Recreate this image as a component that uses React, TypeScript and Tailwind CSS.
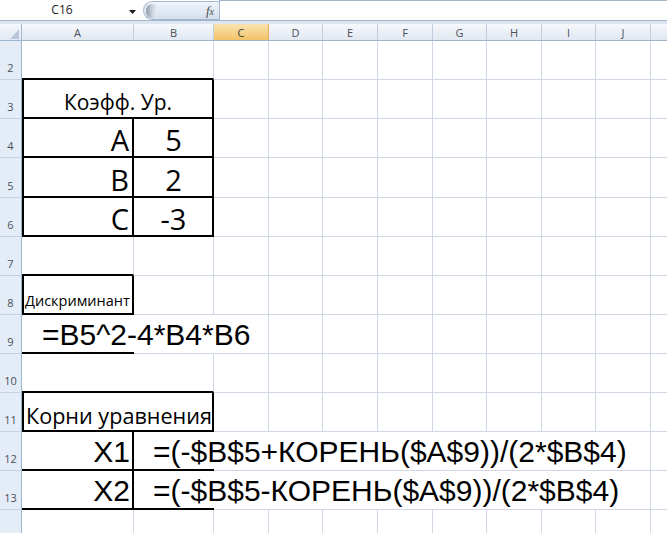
import React from "react";

const F_CAL = "font-['Open_Sans','Noto_Sans',sans-serif]";
const F_AR = "font-['Liberation_Sans',Arial,sans-serif]";

type Col = { k: string; w: string; label?: boolean };
const COLS: Col[] = [
  { k: "A", w: "w-[112px]" },
  { k: "B", w: "w-[80px]" },
  { k: "C", w: "w-[55px]" },
  { k: "D", w: "w-[54px]" },
  { k: "E", w: "w-[55px]" },
  { k: "F", w: "w-[55px]" },
  { k: "G", w: "w-[54px]" },
  { k: "H", w: "w-[55px]" },
  { k: "I", w: "w-[54px]" },
  { k: "J", w: "w-[55px]" },
  { k: "K", w: "w-[55px]", label: false },
];

const DEF = "border-r border-b border-[#d0d7e5]";

type Spec = { cls?: string; w?: string; content?: React.ReactNode; skip?: boolean; align?: string };
type RowDef = { n: number; h: string; cells: Record<string, Spec>; hideNum?: boolean };

const bigCal = `${F_CAL} text-[29px] leading-none text-black`;
const arial = `${F_AR} text-[30px] leading-none text-black whitespace-nowrap`;

const noRight = "border-b border-[#d0d7e5]";

const ROWS: RowDef[] = [
  { n: 2, h: "h-[39px]", cells: { A: { cls: "border-b-2 border-black" }, B: { cls: "border-r border-r-[#d0d7e5] border-b-2 border-b-black" } } },
  {
    n: 3,
    h: "h-[39px]",
    cells: {
      A: {
        w: "w-[192px]",
        cls: "border-l-2 border-r-2 border-b-2 border-black",
        align: "justify-center",
        content: <span className={`${F_CAL} text-[21px] leading-none text-black pb-[4px]`}>Коэфф. Ур.</span>,
      },
      B: { skip: true },
    },
  },
  ...[
    { n: 4, h: "h-[39px]", l: "A", v: "5" },
    { n: 5, h: "h-[40px]", l: "B", v: "2" },
    { n: 6, h: "h-[39px]", l: "C", v: "-3" },
  ].map((r) => ({
    n: r.n,
    h: r.h,
    cells: {
      A: {
        cls: "border-l-2 border-r-2 border-b-2 border-black",
        align: "justify-end",
        content: <span className={`${bigCal} pr-[3px] pb-[2px]`}>{r.l}</span>,
      },
      B: {
        cls: "border-r-2 border-b-2 border-black",
        align: "justify-center",
        content: <span className={`${bigCal} pb-[2px] pl-[1px]`}>{r.v}</span>,
      },
    },
  })),
  { n: 7, h: "h-[39px]", cells: { A: { cls: "border-r border-r-[#d0d7e5] border-b-2 border-b-black" } } },
  {
    n: 8,
    h: "h-[39px]",
    cells: {
      A: {
        cls: "border-l-2 border-r-2 border-b-2 border-black",
        content: <span className={`${F_CAL} text-[14.5px] leading-none text-black pl-[1px] pb-[5px] whitespace-nowrap`}>Дискриминант</span>,
      },
    },
  },
  {
    n: 9,
    h: "h-[39px]",
    cells: {
      A: {
        cls: "border-b-2 border-black",
        content: <span className={`${arial} pl-[20px] pb-[2px] relative z-10`}>=B5^2-4*B4*B6</span>,
      },
      B: { cls: noRight },
    },
  },
  {
    n: 10,
    h: "h-[39px]",
    cells: {
      A: { cls: "border-b-2 border-black" },
      B: { cls: "border-r border-r-[#d0d7e5] border-b-2 border-b-black" },
    },
  },
  {
    n: 11,
    h: "h-[39px]",
    cells: {
      A: {
        w: "w-[192px]",
        cls: "border-l-2 border-r-2 border-b-2 border-black",
        content: <span className={`${F_CAL} text-[21.6px] leading-none text-black pl-[2px] pb-[3px] whitespace-nowrap`}>Корни уравнения</span>,
      },
      B: { skip: true },
    },
  },
  ...[
    { n: 12, x: "X1", f: "=(-$B$5+КОРЕНЬ($A$9))/(2*$B$4)" },
    { n: 13, x: "X2", f: "=(-$B$5-КОРЕНЬ($A$9))/(2*$B$4)" },
  ].map((r) => ({
    n: r.n,
    h: "h-[39px]",
    cells: {
      A: {
        cls: "border-r-2 border-b-2 border-black",
        align: "justify-end",
        content: <span className={`${arial} pr-[2px] pb-[2px]`}>{r.x}</span>,
      },
      B: {
        cls: "border-b-2 border-black",
        content: <span className={`${arial} pl-[19px] pb-[2px] relative z-10`}>{r.f}</span>,
      },
      C: { cls: noRight },
      D: { cls: noRight },
      E: { cls: noRight },
      F: { cls: noRight },
      G: { cls: noRight },
      H: { cls: noRight },
      I: { cls: noRight },
    },
  })),
  { n: 14, h: "h-[39px]", cells: {}, hideNum: true },
];

function FormulaBar() {
  return (
    <div className="flex h-[21px] border-b border-[#9fb3cb] bg-white">
      <div className="w-[140px] flex items-center">
        <div className={`w-[124px] text-center text-[12px] leading-none text-[#222] ${F_CAL}`}>C16</div>
        <svg width="7" height="4" viewBox="0 0 7 4" className="ml-[5px] mt-[3px]">
          <polygon points="0,0 7,0 3.5,4" fill="#1a1a1a" />
        </svg>
      </div>
      <div className="ml-[3px] w-[76px] h-[19px] mt-[1px] rounded-l-[10px] border border-r-0 border-[#a4b7cf] bg-linear-to-b from-[#f1f5fa] to-[#d3deec] flex items-center">
        <div className="ml-[2px] w-[12px] h-[14px] rounded-full bg-linear-to-r from-[#8e9aa9] via-[#c9d2dd] to-[#eef2f7]" />
        <span className="ml-auto mr-[5px] font-['Liberation_Serif',serif] italic text-[13px] leading-none text-[#4a4a4a]">
          f<span className="text-[10px]">x</span>
        </span>
      </div>
      <div className="flex-1 border-t border-l border-[#a4b7cf] bg-white" />
    </div>
  );
}

function HeaderRow() {
  return (
    <div className="flex h-[17px] border-b border-[#9eb6ce]">
      <div className="w-[22px] shrink-0 border-r border-[#9eb6ce] bg-linear-to-b from-[#f4f7fb] to-[#e2e9f3] relative">
        <svg width="9" height="10" viewBox="0 0 9 10" className="absolute right-[2px] bottom-[1px]">
          <polygon points="9,0 9,10 0,10" fill="#b9c7d8" />
        </svg>
      </div>
      {COLS.map((c) => (
        <div
          key={c.k}
          className={`${c.w} shrink-0 flex items-center justify-center border-r ${
            c.k === "C"
              ? "border-[#e3b15c] bg-linear-to-b from-[#fbe3b1] to-[#f2c265] text-[#3c3c3c]"
              : "border-[#c0cee0] bg-linear-to-b from-[#f6f8fb] to-[#e1e8f2] text-[#4a4f57]"
          } text-[11px] leading-none ${F_CAL}`}
        >
          {c.label === false ? null : c.k}
        </div>
      ))}
    </div>
  );
}

function GridRow({ row }: { row: RowDef }) {
  return (
    <div className={`flex ${row.h}`}>
      <div
        className={`w-[22px] shrink-0 flex items-end justify-center pb-[6px] bg-[#e4ecf7] border-r border-r-[#9eb6ce] border-b border-b-[#c5d3e5] text-[11px] leading-none text-[#4a4f57] ${F_CAL}`}
      >
        {row.hideNum ? null : row.n}
      </div>
      {COLS.map((c) => {
        const s = row.cells[c.k];
        if (s?.skip) return null;
        return (
          <div
            key={c.k}
            className={`${s?.w ?? c.w} shrink-0 box-border flex items-end ${s?.align ?? "justify-start"} ${s?.cls ?? DEF}`}
          >
            {s?.content}
          </div>
        );
      })}
    </div>
  );
}

export default function App() {
  return (
    <div className="w-[667px] h-[533px] overflow-hidden bg-white">
      <FormulaBar />
      <div className="h-[3px] bg-[#dfe6f0]" />
      <HeaderRow />
      {ROWS.map((r) => (
        <GridRow key={r.n} row={r} />
      ))}
    </div>
  );
}
